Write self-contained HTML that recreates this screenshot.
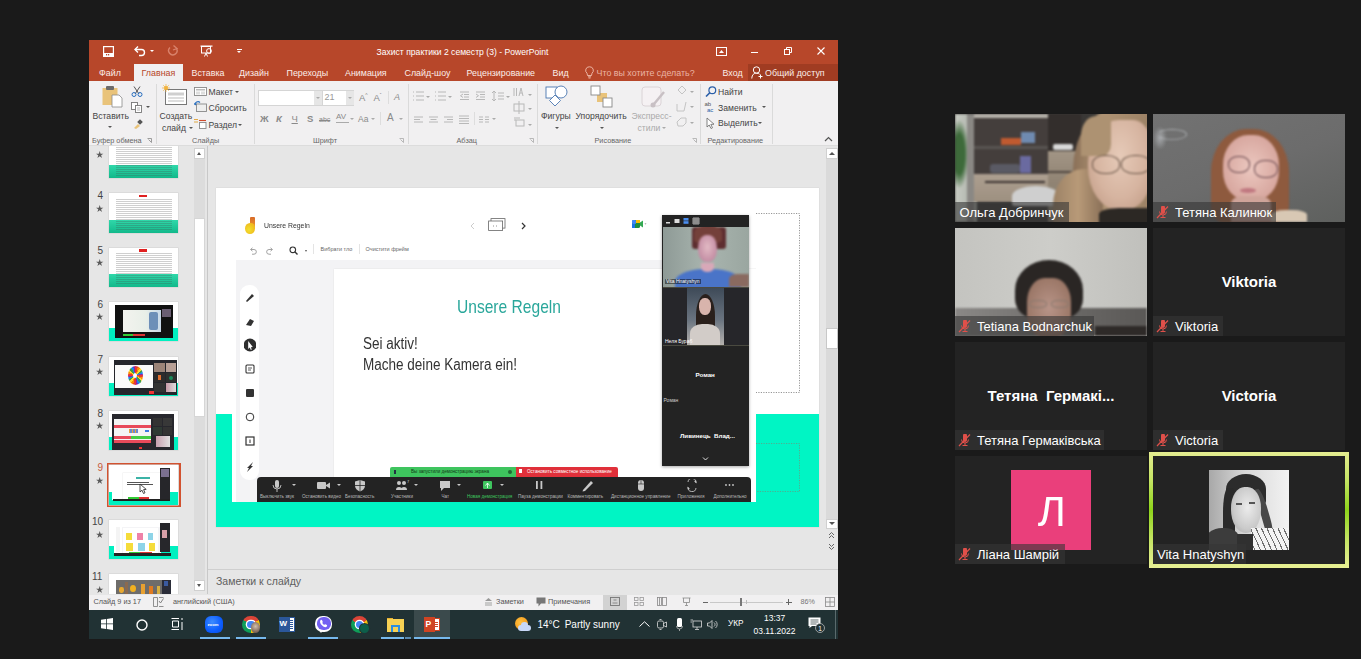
<!DOCTYPE html>
<html><head><meta charset="utf-8">
<style>
*{margin:0;padding:0;box-sizing:border-box}
html,body{width:1361px;height:659px;overflow:hidden;background:#1a1a1a;font-family:"Liberation Sans",sans-serif;position:relative}
.a{position:absolute}
.t{position:absolute;white-space:nowrap;line-height:1}
.tab{top:68.5px;font-size:8.9px;color:#fbeee9}
.sep{top:84px;width:1px;height:60px;background:#dadada}
.glbl{top:137.3px;font-size:7.3px;color:#666}
.rb{font-size:8.6px;color:#444}
.rbl{color:#8a8a8a}
.rbd{font-size:8.6px;color:#aaa}
.dd{width:0;height:0;border-left:2.5px solid transparent;border-right:2.5px solid transparent;border-top:2.5px solid #555}
.ddl{width:0;height:0;border-left:2.5px solid transparent;border-right:2.5px solid transparent;border-top:2.5px solid #aaa}
.th{width:69.6px;height:39.5px;background:#fff;box-shadow:0 0 0 0.6px #d4d4d4}
.tl{background:repeating-linear-gradient(transparent 0 1px,rgba(70,70,70,.26) 1px 2px)}
.num{position:absolute;font-size:10px;color:#444;line-height:1}
.star{position:absolute;font-size:7px;color:#555;line-height:1}
.ztl{top:495px;font-size:4.6px;color:#b8b8b8}
.sb{top:598.3px;font-size:7.3px;color:#555}
.tb{top:620px;font-size:10px;color:#fff}
.tile{position:absolute;width:192px;height:108px;background:#232323;overflow:hidden}
.lbl{position:absolute;left:0;top:88px;height:20px;background:rgba(54,54,54,.6)}
.lbl span{position:absolute;top:3.8px;font-size:13px;color:#fff;white-space:nowrap;line-height:1}
.mute{position:absolute;left:3px;top:4px;width:14px;height:13px}
.big{position:absolute;left:0;width:192px;text-align:center;font-size:15px;font-weight:bold;color:#fff;line-height:1;white-space:nowrap}
</style></head><body>
<!-- PPT window base -->
<div class="a" style="left:89px;top:40px;width:749px;height:570px;background:#e6e6e6"></div>
<!-- title bar -->
<div class="a" style="left:89px;top:40px;width:749px;height:41px;background:#b7472a"></div>
<!-- save -->
<svg class="a" style="left:103px;top:46px" width="11" height="11" viewBox="0 0 11 11"><rect x="0.6" y="0.6" width="9.8" height="9.8" fill="none" stroke="#fff" stroke-width="1.2"/><rect x="1" y="7" width="9" height="3.4" fill="#fff"/><rect x="3" y="8" width="1.2" height="1.4" fill="#b7472a"/><rect x="5" y="8" width="1.2" height="1.4" fill="#b7472a"/></svg>
<!-- undo -->
<svg class="a" style="left:133px;top:45px" width="13" height="12" viewBox="0 0 13 12"><path d="M2 4.5 H8.5 A3 3 0 0 1 8.5 10.5 H6" fill="none" stroke="#fff" stroke-width="1.4"/><path d="M5 1.5 L2 4.5 L5 7.5" fill="none" stroke="#fff" stroke-width="1.4"/></svg>
<div class="a" style="left:150px;top:50px;width:0;height:0;border-left:2.5px solid transparent;border-right:2.5px solid transparent;border-top:2.5px solid #fff"></div>
<!-- redo faded -->
<svg class="a" style="left:167px;top:45px" width="12" height="12" viewBox="0 0 12 12"><path d="M9.5 3.5 A4.2 4.2 0 1 1 3 2.5" fill="none" stroke="#d9826b" stroke-width="1.4"/><path d="M6.5 0.5 L10 3.5 L6 5" fill="none" stroke="#d9826b" stroke-width="1.3"/></svg>
<!-- present icon -->
<svg class="a" style="left:200px;top:45px" width="13" height="12" viewBox="0 0 13 12"><rect x="0.5" y="0.5" width="12" height="1.2" fill="#fff"/><rect x="1.5" y="1.5" width="9" height="6.5" fill="none" stroke="#fff" stroke-width="1"/><circle cx="9" cy="6" r="2.4" fill="none" stroke="#fff" stroke-width="1"/><path d="M6 8 L4.5 11.5 M6 8 L7.5 11.5" stroke="#fff" stroke-width="1"/></svg>
<div class="a" style="left:237px;top:49px;width:5px;height:1px;background:#fff"></div>
<div class="a" style="left:237px;top:51px;width:0;height:0;border-left:2.5px solid transparent;border-right:2.5px solid transparent;border-top:2.5px solid #fff"></div>
<div class="t" style="left:376.5px;top:47.6px;font-size:8.6px;color:#fff">Захист практики 2 семестр (3) - PowerPoint</div>
<!-- ribbon display options -->
<svg class="a" style="left:716px;top:47px" width="11" height="9" viewBox="0 0 11 9"><rect x="0.5" y="0.5" width="10" height="8" fill="none" stroke="#fff" stroke-width="1"/><path d="M3 6 L5.5 3 L8 6 Z" fill="#fff"/></svg>
<div class="a" style="left:751px;top:52px;width:7px;height:1.2px;background:#fff"></div>
<svg class="a" style="left:784px;top:47px" width="8" height="8" viewBox="0 0 8 8"><rect x="0.5" y="2.5" width="5" height="5" fill="none" stroke="#fff" stroke-width="1"/><path d="M2.5 2.5 V0.5 H7.5 V5.5 H5.5" fill="none" stroke="#fff" stroke-width="1"/></svg>
<svg class="a" style="left:817px;top:47px" width="8" height="8" viewBox="0 0 8 8"><path d="M0.5 0.5 L7.5 7.5 M7.5 0.5 L0.5 7.5" stroke="#fff" stroke-width="1.1"/></svg>
<!-- tabs -->
<div class="a" style="left:134px;top:64px;width:49px;height:18px;background:#f1f0f1"></div>
<div class="a" style="left:747.5px;top:64px;width:90.5px;height:17px;background:#a03c22"></div>
<div class="t tab" style="left:99px">Файл</div>
<div class="t tab" style="left:141.5px;color:#b7472a">Главная</div>
<div class="t tab" style="left:191.5px">Вставка</div>
<div class="t tab" style="left:239px">Дизайн</div>
<div class="t tab" style="left:286.5px">Переходы</div>
<div class="t tab" style="left:345px">Анимация</div>
<div class="t tab" style="left:404.5px">Слайд-шоу</div>
<div class="t tab" style="left:466.5px">Рецензирование</div>
<div class="t tab" style="left:552.5px">Вид</div>
<svg class="a" style="left:585px;top:66px" width="9" height="13" viewBox="0 0 9 13"><path d="M4.5 0.8 A3.6 3.6 0 0 1 7 7.2 L6.5 9.5 H2.5 L2 7.2 A3.6 3.6 0 0 1 4.5 0.8 Z" fill="none" stroke="#f0c0b0" stroke-width="0.9"/><path d="M3 10.8 H6 M3.5 12 H5.5" stroke="#f0c0b0" stroke-width="0.9"/></svg>
<div class="t tab" style="left:596.5px;color:#eab4a4">Что вы хотите сделать?</div>
<div class="t tab" style="left:722.5px">Вход</div>
<svg class="a" style="left:751px;top:66px" width="12" height="13" viewBox="0 0 12 13"><circle cx="5.5" cy="4" r="3.2" fill="none" stroke="#fff" stroke-width="1"/><path d="M0.8 12.5 C1 8.5 3 7.2 5.5 7.2 C7 7.2 8 7.6 8.6 8.2" fill="none" stroke="#fff" stroke-width="1"/><path d="M9.5 8.5 V12.5 M7.5 10.5 H11.5" stroke="#fff" stroke-width="1"/></svg>
<div class="t tab" style="left:765px">Общий доступ</div>
<!-- ribbon -->
<div class="a" style="left:89px;top:81px;width:749px;height:65px;background:#f1f0f1;border-bottom:1px solid #dcdcdc"></div>
<!-- separators -->
<div class="a sep" style="left:155.5px"></div>
<div class="a sep" style="left:254px"></div>
<div class="a sep" style="left:408px"></div>
<div class="a sep" style="left:537px"></div>
<div class="a sep" style="left:700px"></div>
<div class="a sep" style="left:771.5px"></div>
<!-- group labels -->
<div class="t glbl" style="left:92px">Буфер обмена</div>
<div class="t glbl" style="left:192px">Слайды</div>
<div class="t glbl" style="left:313px">Шрифт</div>
<div class="t glbl" style="left:456.5px">Абзац</div>
<div class="t glbl" style="left:594.5px">Рисование</div>
<div class="t glbl" style="left:707.5px">Редактирование</div>
<!-- launchers -->
<svg class="a" style="left:147px;top:138px" width="5" height="5" viewBox="0 0 5 5"><path d="M0.5 0.5 H4.5 V4.5 M1.5 1.5 L4.5 4.5" fill="none" stroke="#888" stroke-width="0.8"/></svg>
<svg class="a" style="left:399px;top:138px" width="5" height="5" viewBox="0 0 5 5"><path d="M0.5 0.5 H4.5 V4.5 M1.5 1.5 L4.5 4.5" fill="none" stroke="#aaa" stroke-width="0.8"/></svg>
<svg class="a" style="left:529px;top:138px" width="5" height="5" viewBox="0 0 5 5"><path d="M0.5 0.5 H4.5 V4.5 M1.5 1.5 L4.5 4.5" fill="none" stroke="#aaa" stroke-width="0.8"/></svg>
<svg class="a" style="left:692px;top:138px" width="5" height="5" viewBox="0 0 5 5"><path d="M0.5 0.5 H4.5 V4.5 M1.5 1.5 L4.5 4.5" fill="none" stroke="#aaa" stroke-width="0.8"/></svg>
<svg class="a" style="left:824px;top:136px" width="9" height="6" viewBox="0 0 9 6"><path d="M1 5 L4.5 1.5 L8 5" fill="none" stroke="#555" stroke-width="1.2"/></svg>

<!-- Clipboard group -->
<svg class="a" style="left:101px;top:85px" width="24" height="24" viewBox="0 0 24 24"><rect x="1.5" y="3" width="15" height="17" fill="#e9c37a"/><rect x="5" y="1" width="8" height="4" rx="1" fill="#6b6b6b"/><path d="M11 10 H18 L21 13 V22 H11 Z" fill="#fff" stroke="#8a8a8a" stroke-width="0.8"/></svg>
<div class="t rb" style="left:92.5px;top:111.5px">Вставить</div>
<div class="a dd" style="left:108px;top:126px"></div>
<svg class="a" style="left:131px;top:86px" width="12" height="11" viewBox="0 0 12 11"><path d="M3 0.5 L8 8 M9 0.5 L4 8" stroke="#555" stroke-width="1"/><circle cx="3" cy="8.5" r="2" fill="none" stroke="#2a6fbf" stroke-width="1"/><circle cx="9" cy="8.5" r="2" fill="none" stroke="#2a6fbf" stroke-width="1"/></svg>
<svg class="a" style="left:131px;top:102px" width="12" height="11" viewBox="0 0 12 11"><rect x="0.5" y="0.5" width="6" height="7" fill="#fff" stroke="#777" stroke-width="0.9"/><rect x="4.5" y="3.5" width="6" height="7" fill="#fff" stroke="#777" stroke-width="0.9"/><path d="M6 6 H9 M6 8 H9" stroke="#999" stroke-width="0.7"/></svg>
<div class="a dd" style="left:146px;top:106px"></div>
<svg class="a" style="left:133px;top:119px" width="10" height="10" viewBox="0 0 10 10"><path d="M1 9 L5 5 L7 7 L3 10 Z" fill="#e9c37a"/><rect x="5" y="1" width="4" height="4" transform="rotate(45 7 3)" fill="#555"/></svg>

<!-- Slides group -->
<svg class="a" style="left:162px;top:84px" width="26" height="22" viewBox="0 0 26 22"><rect x="3.5" y="5.5" width="21" height="15" fill="#fff" stroke="#777" stroke-width="1"/><rect x="6" y="8.5" width="16" height="3" fill="#cfcfcf"/><path d="M6 14 H22 M6 17 H22" stroke="#aaa" stroke-width="0.8"/><circle cx="4" cy="4" r="2" fill="#f2b33d"/><path d="M4 0 V8 M0 4 H8 M1.2 1.2 L6.8 6.8 M6.8 1.2 L1.2 6.8" stroke="#f2b33d" stroke-width="0.7"/></svg>
<div class="t rb" style="left:159.5px;top:112px">Создать</div>
<div class="t rb" style="left:162px;top:123.5px">слайд</div>
<div class="a dd" style="left:188.5px;top:127px"></div>
<svg class="a" style="left:194px;top:87px" width="13" height="9" viewBox="0 0 13 9"><rect x="0.5" y="0.5" width="12" height="8" fill="#fff" stroke="#888" stroke-width="0.9"/><rect x="2" y="2" width="9" height="1.5" fill="#bbb"/><rect x="2" y="4.5" width="4" height="3" fill="#ddd"/><rect x="7" y="4.5" width="4" height="3" fill="#ddd"/></svg>
<div class="t rb" style="left:208.5px;top:88px">Макет</div>
<div class="a dd" style="left:235px;top:91px"></div>
<svg class="a" style="left:194px;top:101px" width="13" height="11" viewBox="0 0 13 11"><rect x="2.5" y="3" width="10" height="7.5" fill="#eee" stroke="#888" stroke-width="0.9"/><path d="M1 4 A3 3 0 0 1 6 1.5" fill="none" stroke="#2a6fbf" stroke-width="1.2"/><path d="M0 2 L1.2 4.5 L3 2.8" fill="#2a6fbf"/></svg>
<div class="t rb" style="left:208.5px;top:104px">Сбросить</div>
<svg class="a" style="left:194px;top:118px" width="13" height="11" viewBox="0 0 13 11"><path d="M0 1.5 H4 M0 4 H4" stroke="#e0a030" stroke-width="0.9"/><path d="M5 2.5 H12" stroke="#d04a2a" stroke-width="1.1"/><rect x="5.5" y="4.5" width="6.5" height="6" fill="#fff" stroke="#888" stroke-width="0.9"/></svg>
<div class="t rb" style="left:208.5px;top:121px">Раздел</div>
<div class="a dd" style="left:238px;top:124px"></div>

<!-- Font group -->
<div class="a" style="left:257.5px;top:89.5px;width:96.5px;height:16px;background:#fff;border:1px solid #d5d5d5"></div>
<div class="a" style="left:313.5px;top:90.5px;width:8px;height:14px;background:#e6e6e6"></div>
<div class="a" style="left:321.5px;top:90px;width:1px;height:15px;background:#d5d5d5"></div>
<div class="a" style="left:345.5px;top:90.5px;width:8px;height:14px;background:#e6e6e6"></div>
<div class="a ddl" style="left:316px;top:97px"></div>
<div class="a ddl" style="left:348px;top:97px"></div>
<div class="t" style="left:324.5px;top:93px;font-size:9px;color:#999">21</div>
<div class="t rbl" style="left:359px;top:93px;font-size:9.5px">A<sup style="font-size:5px">^</sup></div>
<div class="t rbl" style="left:373.5px;top:93px;font-size:9.5px">A<sup style="font-size:5px">ˇ</sup></div>
<div class="a" style="left:387.5px;top:91px;width:1px;height:13px;background:#ddd"></div>
<div class="t rbl" style="left:394px;top:93px;font-size:9px;font-style:italic">A</div>
<div class="t rbl" style="left:260px;top:114px;font-size:9.5px;font-weight:bold">Ж</div>
<div class="t rbl" style="left:276px;top:114px;font-size:9.5px;font-style:italic;font-weight:bold">К</div>
<div class="t rbl" style="left:291.5px;top:114px;font-size:9.5px;text-decoration:underline">Ч</div>
<div class="t rbl" style="left:307px;top:114px;font-size:9.5px;font-weight:bold">S</div>
<div class="t rbl" style="left:319px;top:116px;font-size:7px;text-decoration:line-through">abc</div>
<div class="t rbl" style="left:336px;top:113px;font-size:8px">AV</div>
<div class="a" style="left:336px;top:122px;width:13px;height:1px;background:#aaa"></div>
<div class="a ddl" style="left:350px;top:118px"></div>
<div class="t rbl" style="left:358px;top:115px;font-size:8.5px">Aa</div>
<div class="a ddl" style="left:371px;top:118px"></div>
<div class="a" style="left:380px;top:112px;width:1px;height:13px;background:#ddd"></div>
<div class="t rbl" style="left:387px;top:113px;font-size:10px">A</div>
<div class="a ddl" style="left:399px;top:118px"></div>

<!-- Paragraph group (faded icons) -->
<svg class="a" style="left:412px;top:90px" width="110" height="40" viewBox="0 0 110 40" stroke="#b8b8b8" stroke-width="1" fill="none">
 <path d="M1 2 h1 M1 6 h1 M1 10 h1 M4 2 h8 M4 6 h8 M4 10 h8"/>
 <path d="M23 2 h1 M23 6 h1 M23 10 h1 M26 2 h8 M26 6 h8 M26 10 h8"/>
 <path d="M48 2 h9 M52 4.5 h5 M52 7 h5 M48 9.5 h9 M51 4 L48.5 5.7 L51 7.5"/>
 <path d="M64 2 h9 M68 4.5 h5 M68 7 h5 M64 9.5 h9 M64 4 L66.5 5.7 L64 7.5"/>
 <path d="M82 1 V11 M80 3 L82 1 L84 3 M80 9 L82 11 L84 9 M86 3 h6 M86 6 h6 M86 9 h6"/>
 <path d="M2 27 h9 M2 29.5 h6 M2 32 h9"/>
 <path d="M17 27 h9 M18.5 29.5 h6 M17 32 h9"/>
 <path d="M32 27 h9 M35 29.5 h6 M32 32 h9"/>
 <path d="M47 26 h10 M47 28.5 h10 M47 31 h10 M47 33.5 h10"/>
 <path d="M67 27 h4 M67 29.5 h4 M67 32 h4 M73 27 h4 M73 29.5 h4 M73 32 h4"/>
</svg>
<div class="a ddl" style="left:426px;top:96px"></div>
<div class="a ddl" style="left:448px;top:96px"></div>
<div class="a ddl" style="left:506px;top:96px"></div>
<div class="a" style="left:474px;top:112px;width:1px;height:13px;background:#ddd"></div>
<div class="a ddl" style="left:492px;top:118px"></div>
<svg class="a" style="left:513px;top:86px" width="12" height="42" viewBox="0 0 12 42" stroke="#b8b8b8" stroke-width="1" fill="none">
 <path d="M1 2 V10 M3.5 2 V10 M6 10 L8 2 L10 10 M7 7 h2"/>
 <rect x="1" y="18" width="10" height="7"/><path d="M6 15 V28"/>
 <rect x="3" y="34" width="8" height="6"/><path d="M1 32 h6 M1 34 h2"/>
</svg>
<div class="a ddl" style="left:528px;top:94px"></div>
<div class="a ddl" style="left:528px;top:108px"></div>
<div class="a ddl" style="left:528px;top:124px"></div>

<!-- Drawing group -->
<svg class="a" style="left:545px;top:84px" width="24" height="24" viewBox="0 0 24 24"><rect x="1" y="3" width="11" height="11" fill="#fff" stroke="#4a76b0" stroke-width="0.9"/><circle cx="16" cy="8" r="6" fill="#fff" stroke="#4a76b0" stroke-width="0.9"/><path d="M10 11 L15.5 16.5 L10 22 L4.5 16.5 Z" fill="#fff" stroke="#4a76b0" stroke-width="0.9"/></svg>
<div class="t rb" style="left:541px;top:112px">Фигуры</div>
<div class="a dd" style="left:555px;top:127px"></div>
<svg class="a" style="left:590px;top:85px" width="24" height="23" viewBox="0 0 24 23"><rect x="7" y="8" width="10" height="9" fill="#e9c37a"/><rect x="1" y="1" width="9" height="9" fill="#fff" stroke="#888" stroke-width="0.9"/><rect x="13" y="13" width="9" height="9" fill="#fff" stroke="#888" stroke-width="0.9"/></svg>
<div class="t rb" style="left:575.5px;top:112px">Упорядочить</div>
<div class="a dd" style="left:600px;top:127px"></div>
<svg class="a" style="left:641px;top:86px" width="24" height="23" viewBox="0 0 24 23"><rect x="1" y="1" width="19" height="19" rx="3" fill="#f5f1f3" stroke="#d8d0d4" stroke-width="0.9"/><path d="M23 6 L13 18" stroke="#c8c0c4" stroke-width="2.5"/><circle cx="12" cy="19" r="2.5" fill="#c8c0c4"/></svg>
<div class="t rbd" style="left:631.5px;top:112px">Экспресс-</div>
<div class="t rbd" style="left:637.5px;top:123.5px">стили</div>
<div class="a ddl" style="left:662px;top:127px"></div>
<svg class="a" style="left:676px;top:85px" width="11" height="43" viewBox="0 0 11 43" fill="none" stroke="#c4c4c4" stroke-width="1">
 <path d="M2 5 L6 1 L10 5 L6 9 Z"/>
 <path d="M1 19 V26 H8 L10 17"/>
 <path d="M1 37 L5 33 H10 V38 L7 41 H2 Z"/>
</svg>
<div class="a ddl" style="left:690px;top:91px"></div>
<div class="a ddl" style="left:690px;top:106px"></div>
<div class="a ddl" style="left:690px;top:122px"></div>

<!-- Editing group -->
<svg class="a" style="left:705px;top:86px" width="12" height="11" viewBox="0 0 12 11"><circle cx="7.3" cy="4.2" r="3.4" fill="none" stroke="#2a5fa8" stroke-width="1.2"/><path d="M4.8 6.7 L1 10.5" stroke="#2a5fa8" stroke-width="1.6"/></svg>
<div class="t rb" style="left:718px;top:88px">Найти</div>
<div class="t" style="left:704.5px;top:101px;font-size:6px;color:#555">ab</div>
<div class="t" style="left:707px;top:107px;font-size:6px;color:#2a5fa8">ac</div>
<div class="t rb" style="left:718px;top:103.5px">Заменить</div>
<div class="a dd" style="left:762px;top:106px"></div>
<svg class="a" style="left:706px;top:117px" width="9" height="12" viewBox="0 0 9 12"><path d="M1 1 V10 L3.2 8 L5 11.5 L6.5 10.8 L4.8 7.4 L8 7.2 Z" fill="#fff" stroke="#666" stroke-width="0.8"/></svg>
<div class="t rb" style="left:718px;top:119px">Выделить</div>
<div class="a dd" style="left:758px;top:122px"></div>
<!-- thumbnails panel -->
<div class="a" style="left:89px;top:146px;width:118px;height:448px;background:#e6e6e6;overflow:hidden">
 <!-- slide 3 partial -->
 <div class="a th" style="left:19.7px;top:-8px;height:40px"></div>
 <div class="a" style="left:19.7px;top:19px;width:69.6px;height:13px;background:linear-gradient(#30d8aa,#12b88a)"></div>
 <div class="a tl" style="left:26.5px;top:-6px;width:56px;height:36px"></div>
 <svg class="a" style="left:7.2px;top:4.5px" width="7.4" height="7" viewBox="0 0 10 9.5"><path d="M5 0 L6.2 3.6 L10 3.6 L6.9 5.8 L8.1 9.5 L5 7.2 L1.9 9.5 L3.1 5.8 L0 3.6 L3.8 3.6 Z" fill="#5a5a5a"/></svg>
 <!-- slide 4 -->
 <div class="a num" style="left:8.5px;top:45.0px">4</div><svg class="a" style="left:7.2px;top:58.6px" width="7.4" height="7" viewBox="0 0 10 9.5"><path d="M5 0 L6.2 3.6 L10 3.6 L6.9 5.8 L8.1 9.5 L5 7.2 L1.9 9.5 L3.1 5.8 L0 3.6 L3.8 3.6 Z" fill="#5a5a5a"/></svg>
 <div class="a th" style="left:19.7px;top:47px"></div>
 <div class="a" style="left:19.7px;top:73.5px;width:69.6px;height:13px;background:linear-gradient(#30d8aa,#12b88a)"></div>
 <div class="a tl" style="left:26.5px;top:51.5px;width:56px;height:33px"></div>
 <div class="a" style="left:50px;top:48.7px;width:8px;height:2.4px;background:#e02020"></div>
 <!-- slide 5 -->
 <div class="a num" style="left:8.5px;top:99.5px">5</div><svg class="a" style="left:7.2px;top:113.1px" width="7.4" height="7" viewBox="0 0 10 9.5"><path d="M5 0 L6.2 3.6 L10 3.6 L6.9 5.8 L8.1 9.5 L5 7.2 L1.9 9.5 L3.1 5.8 L0 3.6 L3.8 3.6 Z" fill="#5a5a5a"/></svg>
 <div class="a th" style="left:19.7px;top:101.5px"></div>
 <div class="a" style="left:19.7px;top:128px;width:69.6px;height:13px;background:linear-gradient(#30d8aa,#12b88a)"></div>
 <div class="a tl" style="left:26.5px;top:106px;width:56px;height:33px"></div>
 <div class="a" style="left:50px;top:103.2px;width:8px;height:2.4px;background:#e02020"></div>
 <!-- slide 6 -->
 <div class="a num" style="left:8.5px;top:153.7px">6</div><svg class="a" style="left:7.2px;top:167.3px" width="7.4" height="7" viewBox="0 0 10 9.5"><path d="M5 0 L6.2 3.6 L10 3.6 L6.9 5.8 L8.1 9.5 L5 7.2 L1.9 9.5 L3.1 5.8 L0 3.6 L3.8 3.6 Z" fill="#5a5a5a"/></svg>
 <div class="a th" style="left:19.7px;top:155.7px"></div>
 <div class="a" style="left:19.7px;top:182.3px;width:69.6px;height:13px;background:#00f0c0"></div>
 <div class="a" style="left:25.8px;top:159.3px;width:58.2px;height:32.7px;background:#111"></div>
 <div class="a" style="left:34px;top:163.5px;width:38px;height:22px;background:linear-gradient(90deg,#f3f3ee,#e8efe8 60%,#c8d8e8)"></div>
 <div class="a" style="left:60px;top:166px;width:9px;height:18px;background:#6d8fb8;border-radius:2px"></div>
 <div class="a" style="left:73px;top:163px;width:9px;height:8px;background:#6a5e72"></div>
 <div class="a" style="left:34px;top:188px;width:10px;height:1.6px;background:#3c3"></div><div class="a" style="left:44px;top:188px;width:12px;height:1.6px;background:#d33"></div>
 <!-- slide 7 -->
 <div class="a num" style="left:8.5px;top:208.7px">7</div><svg class="a" style="left:7.2px;top:222.3px" width="7.4" height="7" viewBox="0 0 10 9.5"><path d="M5 0 L6.2 3.6 L10 3.6 L6.9 5.8 L8.1 9.5 L5 7.2 L1.9 9.5 L3.1 5.8 L0 3.6 L3.8 3.6 Z" fill="#5a5a5a"/></svg>
 <div class="a th" style="left:19.7px;top:210.7px"></div>
 <div class="a" style="left:19.7px;top:236.5px;width:69.6px;height:13px;background:#00f0c0"></div>
 <div class="a" style="left:25px;top:213.7px;width:63px;height:35.5px;background:#25262c"></div>
 <div class="a" style="left:26px;top:219px;width:38px;height:23px;background:#fafafa"></div>
 <div class="a" style="left:38.5px;top:220px;width:15px;height:19px;border-radius:50%;background:repeating-conic-gradient(#e53935 0 15deg,#fb8c00 15deg 30deg,#fdd835 30deg 45deg,#43a047 45deg 60deg,#1e88e5 60deg 75deg,#8e24aa 75deg 90deg)"></div>
 <div class="a" style="left:44px;top:227px;width:4px;height:5px;border-radius:50%;background:#fff"></div>
 <div class="a" style="left:65px;top:217px;width:10.5px;height:9px;background:#9c8478"></div>
 <div class="a" style="left:76.5px;top:217px;width:10.5px;height:9px;background:#b8a096"></div>
 <div class="a" style="left:65px;top:227px;width:10.5px;height:9px;background:#2e2c2c"></div><div class="a" style="left:69px;top:229px;width:3px;height:5px;background:#e07030"></div>
 <div class="a" style="left:76.5px;top:227px;width:10.5px;height:9px;background:#2e302e"></div><div class="a" style="left:80px;top:229.5px;width:4px;height:4px;border-radius:50%;background:#1a8a5a"></div>
 <div class="a" style="left:65px;top:237px;width:10.5px;height:9px;background:#333"></div>
 <div class="a" style="left:76.5px;top:237px;width:10.5px;height:9px;background:linear-gradient(90deg,#c89aa8,#ddd)"></div>
 <div class="a" style="left:60px;top:245px;width:5px;height:3px;background:#e33"></div>
 <!-- slide 8 -->
 <div class="a num" style="left:8.5px;top:262.8px">8</div><svg class="a" style="left:7.2px;top:276.4px" width="7.4" height="7" viewBox="0 0 10 9.5"><path d="M5 0 L6.2 3.6 L10 3.6 L6.9 5.8 L8.1 9.5 L5 7.2 L1.9 9.5 L3.1 5.8 L0 3.6 L3.8 3.6 Z" fill="#5a5a5a"/></svg>
 <div class="a th" style="left:19.7px;top:264.8px"></div>
 <div class="a" style="left:19.7px;top:290.7px;width:69.6px;height:13.6px;background:#00f0c0"></div>
 <div class="a" style="left:23px;top:268px;width:62px;height:36px;background:#27272d"></div>
 <div class="a" style="left:24.5px;top:273px;width:37.5px;height:24px;background:#f4f4f4"></div>
 <div class="a" style="left:24.5px;top:279px;width:37.5px;height:2.5px;background:#e84a5a"></div>
 <div class="a" style="left:40px;top:283px;width:9px;height:4px;background:repeating-linear-gradient(90deg,#e8a040 0 1.5px,#6a8ad0 1.5px 3px)"></div>
 <div class="a" style="left:56px;top:284px;width:4px;height:2px;background:#3a7ae0"></div>
 <div class="a" style="left:24.5px;top:290px;width:37.5px;height:2.5px;background:#e84a5a"></div>
 <div class="a" style="left:42px;top:290px;width:20px;height:2.5px;background:#4c4"></div>
 <div class="a" style="left:24.5px;top:294px;width:37.5px;height:2.5px;background:#e84a5a"></div>
 <div class="a" style="left:64px;top:272px;width:9px;height:8px;background:#333"></div><div class="a" style="left:74px;top:272px;width:9px;height:8px;background:#383838"></div>
 <div class="a" style="left:64px;top:281px;width:9px;height:8px;background:#2e3a34"></div><div class="a" style="left:74px;top:281px;width:9px;height:8px;background:#333"></div>
 <div class="a" style="left:67px;top:290px;width:14px;height:11px;background:linear-gradient(90deg,#c8a0b0,#e0e0e0)"></div>
 <div class="a" style="left:50px;top:301px;width:3px;height:2px;background:#e33"></div>
 <!-- slide 9 selected -->
 <div class="a num" style="left:8.5px;top:317.0px;color:#c75b3b">9</div><svg class="a" style="left:7.2px;top:330.6px" width="7.4" height="7" viewBox="0 0 10 9.5"><path d="M5 0 L6.2 3.6 L10 3.6 L6.9 5.8 L8.1 9.5 L5 7.2 L1.9 9.5 L3.1 5.8 L0 3.6 L3.8 3.6 Z" fill="#5a5a5a"/></svg>
 <div class="a" style="left:17.5px;top:316.5px;width:74.5px;height:44.5px;border:2px solid #d2522f"></div>
 <div class="a th" style="left:19.7px;top:319px;height:39.5px"></div>
 <div class="a" style="left:19.7px;top:345.5px;width:69.6px;height:13px;background:#00f0c0"></div>
 <div class="a" style="left:22.5px;top:321px;width:58px;height:33px;background:#fff"></div>
 <div class="a" style="left:34px;top:327px;width:37px;height:26px;background:#fff;box-shadow:0 0 0 0.5px #eee"></div>
 <div class="a" style="left:47px;top:331px;width:14px;height:1.5px;background:#3bb3a6"></div>
 <div class="a" style="left:38px;top:336px;width:22px;height:1px;background:#555"></div><div class="a" style="left:38px;top:338px;width:26px;height:1px;background:#555"></div>
 <div class="a" style="left:71px;top:322px;width:10px;height:32px;background:#26262a"></div>
 <div class="a" style="left:72px;top:323px;width:8px;height:8px;background:#7b7090"></div>
 <div class="a" style="left:24px;top:352.5px;width:57px;height:2px;background:#222"></div>
 <div class="a" style="left:39px;top:351px;width:11px;height:1.5px;background:#3c3"></div><div class="a" style="left:50px;top:351px;width:10px;height:1.5px;background:#d33"></div>
 <svg class="a" style="left:50px;top:337px" width="8" height="11" viewBox="0 0 8 11"><path d="M1 1 V9 L3 7.2 L4.5 10.5 L6 9.8 L4.6 6.6 L7.2 6.4 Z" fill="#fff" stroke="#222" stroke-width="0.8"/></svg>
 <!-- slide 10 -->
 <div class="a num" style="left:3px;top:371.0px">10</div><svg class="a" style="left:7.2px;top:384.6px" width="7.4" height="7" viewBox="0 0 10 9.5"><path d="M5 0 L6.2 3.6 L10 3.6 L6.9 5.8 L8.1 9.5 L5 7.2 L1.9 9.5 L3.1 5.8 L0 3.6 L3.8 3.6 Z" fill="#5a5a5a"/></svg>
 <div class="a th" style="left:19.7px;top:373.5px"></div>
 <div class="a" style="left:19.7px;top:400px;width:69.6px;height:12.9px;background:#00f0c0"></div>
 <div class="a" style="left:24.5px;top:376px;width:47px;height:31px;background:#fff"></div>
 <div class="a" style="left:27px;top:381px;width:4px;height:25px;background:#f4f4f4"></div>
 <div class="a" style="left:33px;top:381px;width:38px;height:26px;background:#f4f4f6"></div>
 <div class="a" style="left:34px;top:382px;width:35px;height:25px;background:#fff"></div>
 <div class="a" style="left:36.8px;top:387.2px;width:6.7px;height:7.3px;background:#f5dc3a"></div>
 <div class="a" style="left:47.8px;top:387.2px;width:5.8px;height:7.3px;background:#ee82a8"></div>
 <div class="a" style="left:58.7px;top:387.2px;width:5.3px;height:7.3px;background:#8ed4e8"></div>
 <div class="a" style="left:36.5px;top:396.9px;width:7.5px;height:7.9px;background:#f5dc3a"></div>
 <div class="a" style="left:49px;top:396.9px;width:6.5px;height:7.9px;background:#8ed4e8"></div>
 <div class="a" style="left:60px;top:396.9px;width:6px;height:7.9px;background:#f5dc3a"></div>
 <div class="a" style="left:71px;top:377px;width:10px;height:29px;background:#27272b"></div>
 <div class="a" style="left:73px;top:384px;width:5px;height:8px;background:#d8a0a8"></div>
 <div class="a" style="left:24.7px;top:406.5px;width:57px;height:3px;background:#222"></div>
 <div class="a" style="left:40px;top:405.5px;width:11px;height:1.2px;background:#3c3"></div><div class="a" style="left:51px;top:405.5px;width:12px;height:1.2px;background:#d33"></div>
 <!-- slide 11 -->
 <div class="a num" style="left:3px;top:426.0px">11</div><svg class="a" style="left:7.2px;top:439.6px" width="7.4" height="7" viewBox="0 0 10 9.5"><path d="M5 0 L6.2 3.6 L10 3.6 L6.9 5.8 L8.1 9.5 L5 7.2 L1.9 9.5 L3.1 5.8 L0 3.6 L3.8 3.6 Z" fill="#5a5a5a"/></svg>
 <div class="a th" style="left:19.7px;top:428px"></div>
 <div class="a" style="left:27px;top:434px;width:54.7px;height:20px;background:#6e6c6a"></div>
 <div class="a" style="left:30px;top:441px;width:5px;height:6px;background:#e8a830;border-radius:40%"></div>
 <div class="a" style="left:36px;top:436px;width:3px;height:12px;background:#8a6a50"></div>
 <div class="a" style="left:41px;top:439px;width:6px;height:7px;background:#f0b020;border-radius:50%"></div>
 <div class="a" style="left:52px;top:438px;width:4px;height:10px;background:#e8a030"></div>
 <div class="a" style="left:60px;top:440px;width:4px;height:8px;background:#e07a20"></div>
 <div class="a" style="left:68px;top:440px;width:3px;height:8px;background:#d8b040"></div>
 <div class="a" style="left:73px;top:434px;width:8.7px;height:20px;background:#2a2c38"></div>
 <div class="a" style="left:75px;top:435px;width:4px;height:5px;background:#3a5aa0"></div>
</div>
<!-- thumbs scrollbar -->
<div class="a" style="left:193.5px;top:148px;width:11px;height:443px;background:#dcdcdc"></div>
<div class="a" style="left:193.5px;top:148px;width:11px;height:11px;background:#fff;border:1px solid #d0d0d0"></div>
<div class="a" style="left:196.5px;top:152px;width:0;height:0;border-left:2.5px solid transparent;border-right:2.5px solid transparent;border-bottom:3px solid #555"></div>
<div class="a" style="left:193.5px;top:218px;width:11px;height:199px;background:#fff;border:1px solid #d6d6d6"></div>
<div class="a" style="left:193.5px;top:580px;width:11px;height:11px;background:#fff;border:1px solid #d0d0d0"></div>
<div class="a" style="left:196.5px;top:584px;width:0;height:0;border-left:2.5px solid transparent;border-right:2.5px solid transparent;border-top:3px solid #555"></div>
<div class="a" style="left:206.5px;top:146px;width:1px;height:448px;background:#c8c8c8"></div>
<!-- canvas -->
<div class="a" style="left:207.5px;top:146px;width:618.5px;height:423px;background:#e6e6e6"></div>
<div class="a" style="left:207.5px;top:569px;width:630px;height:1px;background:#cfcfcf"></div>
<div class="t" style="left:216px;top:576.3px;font-size:10.5px;color:#5e5e5e">Заметки к слайду</div>
<!-- canvas scrollbar -->
<div class="a" style="left:826px;top:146px;width:12px;height:423px;background:#e6e6e6"></div>
<div class="a" style="left:826px;top:159px;width:11.5px;height:360px;background:#dadada"></div>
<div class="a" style="left:826px;top:148px;width:11.5px;height:11px;background:#fff;border:1px solid #d0d0d0"></div>
<div class="a" style="left:829px;top:152px;width:0;height:0;border-left:3px solid transparent;border-right:3px solid transparent;border-bottom:3px solid #555"></div>
<div class="a" style="left:826px;top:328px;width:11.5px;height:20.5px;background:#fff;border:1px solid #c8c8c8"></div>
<div class="a" style="left:826px;top:518.5px;width:11.5px;height:10px;background:#fff;border:1px solid #d0d0d0"></div>
<div class="a" style="left:829px;top:522px;width:0;height:0;border-left:3px solid transparent;border-right:3px solid transparent;border-top:3px solid #555"></div>
<svg class="a" style="left:828px;top:531px" width="7" height="20" viewBox="0 0 7 20" fill="none" stroke="#666" stroke-width="1"><path d="M1 4 L3.5 1.5 L6 4 M1 7 L3.5 4.5 L6 7 M1 13 L3.5 15.5 L6 13 M1 16 L3.5 18.5 L6 16"/></svg>
<!-- slide -->
<div class="a" style="left:215.5px;top:187.5px;width:603.5px;height:339px;background:#fff;box-shadow:0 0 1px #bbb"></div>
<div class="a" style="left:215.5px;top:413.7px;width:603.5px;height:113.3px;background:#00f5c4"></div>
<!-- placeholder dotted boxes -->
<svg class="a" style="left:755px;top:213px" width="46" height="181" viewBox="0 0 46 181"><path d="M1 0.5 H44.5 V179.5 H1" fill="none" stroke="#8a8a8a" stroke-width="0.9" stroke-dasharray="1.2 1.3"/></svg>
<svg class="a" style="left:755px;top:443px" width="46" height="50" viewBox="0 0 46 50"><path d="M1 0.5 H44.5 V48.5 H1" fill="none" stroke="#5aa58a" stroke-width="0.9" stroke-dasharray="1.2 1.3"/></svg>
<!-- jamboard screenshot -->
<div class="a" style="left:232px;top:205px;width:524px;height:296.5px;background:#fff;overflow:hidden">
 <!-- logo -->
 
 <div class="a" style="left:17.6px;top:11.5px;width:5.2px;height:12px;background:linear-gradient(#d86a28,#f0a030);border-radius:1px"></div><div class="a" style="left:12.5px;top:17.5px;width:10.3px;height:11.5px;background:radial-gradient(ellipse at 40% 60%,#f2e030,#f0c020 60%,#f0b020);border-radius:50% 40% 50% 50%;filter:blur(0.3px)"></div>
 <div class="t" style="left:31.5px;top:17px;font-size:7.8px;color:#333;transform:scaleX(.88);transform-origin:0 0">Unsere Regeln</div>
 <svg class="a" style="left:238px;top:17px" width="5" height="8" viewBox="0 0 5 8"><path d="M4 1 L1 4 L4 7" fill="none" stroke="#ccc" stroke-width="1"/></svg>
 <svg class="a" style="left:256px;top:13px" width="18" height="14" viewBox="0 0 18 14"><rect x="3" y="0.6" width="14" height="9.5" fill="none" stroke="#666" stroke-width="0.8"/><rect x="0.6" y="3" width="14" height="9.5" fill="#fff" stroke="#666" stroke-width="0.8"/><path d="M5 8 h1 M8 8 h1" stroke="#777" stroke-width="0.8"/></svg>
 <svg class="a" style="left:289px;top:17px" width="5" height="8" viewBox="0 0 5 8"><path d="M1 1 L4 4 L1 7" fill="none" stroke="#333" stroke-width="1.2"/></svg>
 <svg class="a" style="left:400px;top:14px" width="15" height="10" viewBox="0 0 15 10"><rect x="0" y="1" width="8" height="8" rx="1.5" fill="#1e8e3e"/><rect x="0" y="1" width="4" height="4" rx="1" fill="#4285f4"/><rect x="4" y="1" width="4" height="3" fill="#fbbc04"/><rect x="0" y="5" width="3" height="4" fill="#1a73e8"/><path d="M8 3.5 L11 1.5 V8.5 L8 6.5 Z" fill="#34a853"/><path d="M12.5 4.5 l1 1 l1 -1 z" fill="#777"/></svg>
 <!-- toolbar row -->
 <svg class="a" style="left:17px;top:42px" width="8" height="8" viewBox="0 0 8 8"><path d="M2 2.5 H5 A2.3 2.3 0 0 1 5 7.2 H3" fill="none" stroke="#999" stroke-width="0.9"/><path d="M3.5 0.8 L1.5 2.5 L3.5 4.2" fill="none" stroke="#999" stroke-width="0.9"/></svg>
 <svg class="a" style="left:34px;top:42px" width="8" height="8" viewBox="0 0 8 8"><path d="M6 2.5 H3 A2.3 2.3 0 0 0 3 7.2 H5" fill="none" stroke="#999" stroke-width="0.9"/><path d="M4.5 0.8 L6.5 2.5 L4.5 4.2" fill="none" stroke="#999" stroke-width="0.9"/></svg>
 <svg class="a" style="left:57px;top:41px" width="9" height="9" viewBox="0 0 9 9"><circle cx="3.8" cy="3.8" r="2.8" fill="none" stroke="#333" stroke-width="1.1"/><path d="M5.8 5.8 L8.5 8.5" stroke="#333" stroke-width="1.4"/></svg>
 <div class="a" style="left:73px;top:45px;width:0;height:0;border-left:1.5px solid transparent;border-right:1.5px solid transparent;border-top:2px solid #555"></div>
 <div class="a" style="left:81px;top:39px;width:1px;height:10px;background:#e4e4e4"></div>
 <div class="t" style="left:88.5px;top:42.3px;font-size:5.5px;color:#666">Вибрати тло</div>
 <div class="a" style="left:127px;top:39px;width:1px;height:10px;background:#e4e4e4"></div>
 <div class="t" style="left:133.5px;top:42.3px;font-size:5.5px;color:#666">Очистити фрейм</div>
 <!-- gray canvas -->
 <div class="a" style="left:4px;top:54.5px;width:513px;height:243px;background:#f3f3f5"></div>
 <div class="a" style="left:8px;top:80px;width:19px;height:195px;background:#fff;border-radius:9px"></div>
 <svg class="a" style="left:12px;top:85px" width="12" height="190" viewBox="0 0 12 190">
  <path d="M2 11 L8 4 L10 6 L3 12 Z" fill="#333"/>
  <path d="M2 35 L6 29 L10 31 L7 36 Z" fill="#333"/>
  <circle cx="6" cy="55" r="6.4" fill="#2e2e2e"/><path d="M4.2 51 V59 L5.8 57.6 L6.8 60 L7.8 59.5 L6.9 57.2 L8.8 57 Z" fill="#fff"/>
  <rect x="2" y="75" width="8" height="8" rx="1" fill="none" stroke="#333" stroke-width="1.1"/><path d="M4 78 h4 M4 80 h3" stroke="#333" stroke-width="0.8"/>
  <rect x="2" y="99" width="8" height="8" rx="1" fill="#333"/>
  <circle cx="6" cy="127" r="3.8" fill="none" stroke="#333" stroke-width="1"/>
  <rect x="2" y="147" width="8" height="8" fill="none" stroke="#333" stroke-width="1.2"/><path d="M6 149.5 V153" stroke="#333" stroke-width="1"/>
  <path d="M3 178 L9 172 L7 176 L9 176 L3 182 L5 178 Z" fill="#333"/>
 </svg>
 <!-- frame -->
 <div class="a" style="left:102px;top:64.3px;width:430px;height:240px;background:#fff;box-shadow:0 0 1.5px #ddd"></div>
 <div class="t" style="left:224.6px;top:92.2px;font-size:19px;color:#2aa79b;transform:scaleX(.82);transform-origin:0 0">Unsere Regeln</div>
 <div class="t" style="left:130.6px;top:131.3px;font-size:16px;color:#333;transform:scaleX(.845);transform-origin:0 0">Sei aktiv!</div>
 <div class="t" style="left:130.6px;top:151.5px;font-size:16px;color:#333;transform:scaleX(.845);transform-origin:0 0">Mache deine Kamera ein!</div>
</div>
<!-- zoom floating panel in share -->
<div class="a" style="left:661.5px;top:214.5px;width:87.5px;height:251px;background:#232323;box-shadow:0 1px 3px rgba(0,0,0,.35)"></div>
<svg class="a" style="left:664px;top:217px" width="40" height="8" viewBox="0 0 40 8"><rect x="2" y="5" width="4" height="1.5" fill="#ddd"/><rect x="10.5" y="2" width="5" height="4" fill="#ddd"/><rect x="19.5" y="1" width="5" height="2.6" fill="#4a8ef0"/><rect x="19.5" y="4.2" width="5" height="2.6" fill="#4a8ef0"/><path d="M29 1 h6 v6 h-6 z M31 1 v6 M33 1 v6 M29 3 h6 M29 5 h6" fill="none" stroke="#ddd" stroke-width="0.7"/></svg>
<!-- video 1 -->
<div class="a" style="left:663px;top:226.6px;width:85.5px;height:60px;overflow:hidden;background:linear-gradient(90deg,#8e9a96,#a9b5af 50%,#9aa6a0)">
 <div class="a" style="left:0;top:0;width:86px;height:60px;filter:blur(0.9px)">
 <div class="a" style="left:29px;top:0;width:34px;height:22px;background:#5e2e30;border-radius:3px"></div>
 <div class="a" style="left:31px;top:-2px;width:28px;height:18px;background:#74403a;border-radius:45% 45% 20% 20%"></div>
 <div class="a" style="left:35px;top:8px;width:19px;height:27px;background:radial-gradient(ellipse at 50% 45%,#e2bac4,#c48ea4 70%,#a87890);border-radius:45%"></div>
 <div class="a" style="left:12px;top:42px;width:66px;height:28px;background:#4a74c8;border-radius:45% 45% 0 0"></div>
 <div class="a" style="left:38px;top:36px;width:13px;height:9px;background:#d8a8b8;border-radius:0 0 50% 50%"></div>
 <div class="a" style="left:66px;top:47px;width:20px;height:13px;background:#8a6a60;border-radius:40% 0 0 0"></div>
 </div>
 <div class="t" style="left:2px;top:52px;font-size:5px;color:#fff;background:rgba(0,0,0,.45);padding:0 1px">Vita Hnatyshyn</div>
</div>
<!-- video 2 -->
<div class="a" style="left:663px;top:287px;width:85.5px;height:59px;background:#26262a;border-top:1px solid #4a4a40;border-bottom:1px solid #4a4a40;overflow:hidden">
 <div class="a" style="left:23.5px;top:0;width:37px;height:58px;overflow:hidden;background:linear-gradient(#3e4a58,#6a7480 55%,#b8b4b0)">
  <div class="a" style="left:0;top:0;width:37px;height:58px;filter:blur(0.7px)">
  <div class="a" style="left:9px;top:6px;width:19px;height:44px;background:#2a201c;border-radius:50% 50% 30% 30%"></div>
  <div class="a" style="left:12px;top:10px;width:12px;height:17px;background:#d8b4ac;border-radius:45%"></div>
  <div class="a" style="left:3px;top:36px;width:30px;height:24px;background:#d2ccc8;border-radius:40% 40% 0 0"></div>
  </div>
 </div>
 <div class="t" style="left:2px;top:51px;font-size:5px;color:#fff">Неля Бураб</div>
</div>
<div class="t" style="left:695.5px;top:372px;font-size:6.2px;font-weight:bold;color:#fff">Роман</div>
<div class="t" style="left:663.5px;top:398px;font-size:5px;color:#ccc">Роман</div>
<div class="t" style="left:680px;top:432.5px;font-size:6.2px;font-weight:bold;color:#fff">Ливинець&nbsp; Влад...</div>
<svg class="a" style="left:702px;top:457px" width="7" height="4" viewBox="0 0 7 4"><path d="M1 0.5 L3.5 3 L6 0.5" fill="none" stroke="#ddd" stroke-width="1"/></svg>

<!-- banners -->
<div class="a" style="left:390px;top:466.5px;width:126px;height:11px;background:#3ec45e;border-radius:2px 0 0 0"></div>
<div class="t" style="left:411px;top:469.5px;font-size:4.6px;color:#123a18">Вы запустили демонстрацию экрана</div>
<div class="a" style="left:394px;top:469.5px;width:2px;height:4px;background:#234"></div>
<div class="a" style="left:507.5px;top:469.5px;width:4px;height:4px;border-radius:50%;background:#1f6a33"></div>
<div class="a" style="left:515.8px;top:466.5px;width:102.5px;height:11px;background:#e0303a;border-radius:0 2px 0 0"></div>
<div class="a" style="left:519px;top:468.5px;width:3px;height:4px;background:#fff"></div>
<div class="t" style="left:527px;top:469.5px;font-size:4.6px;color:#fff">Остановить совместное использование</div>
<!-- toolbar -->
<div class="a" style="left:257px;top:476.5px;width:494px;height:25px;background:#232323;border-radius:4px 4px 0 0"></div>
<svg class="a" style="left:257px;top:479px" width="494" height="14" viewBox="0 0 494 14" fill="#c8c8c8">
 <rect x="18" y="1" width="4" height="8" rx="2"/><path d="M16 6 A4 4 0 0 0 24 6 M20 10 V13" fill="none" stroke="#c8c8c8" stroke-width="0.9"/>
 <path d="M35 5 l2 2 l2 -2 z"/>
 <rect x="60" y="3" width="9" height="7" rx="1"/><path d="M69 6 L73 3.5 V9.5 L69 7 Z"/>
 <path d="M80 5 l2 2 l2 -2 z"/>
 <path d="M103 1 L108 2.5 V6.5 C108 9.5 106 11.5 103 12.5 C100 11.5 98 9.5 98 6.5 V2.5 Z"/><path d="M103 1 V12.5 M98 6.5 H108" stroke="#232323" stroke-width="0.8"/>
 <circle cx="142" cy="4" r="2"/><circle cx="147" cy="4" r="2"/><path d="M139 11 A3 3 0 0 1 145 11 Z M144 11 A3 3 0 0 1 150 11 Z"/>
 <text x="150" y="4" font-size="4" fill="#ccc" font-family="Liberation Sans">7</text>
 <path d="M157 5 l2 2 l2 -2 z"/>
 <path d="M183 2 h10 v7 h-6 l-3 3 v-3 h-1 z"/>
 <path d="M200 5 l2 2 l2 -2 z"/>
 <rect x="226" y="2" width="9" height="8" rx="1" fill="#3ec45e"/><path d="M228.5 6.5 L230.5 4 L232.5 6.5 M230.5 4 V9" stroke="#fff" stroke-width="0.8" fill="none"/>
 <path d="M243 5 l2 2 l2 -2 z"/>
 <rect x="279" y="2" width="1.8" height="8"/><rect x="283.5" y="2" width="1.8" height="8"/>
 <path d="M326 11 L334 2 L336 4 L328 12 L325.5 12.5 Z"/>
 <rect x="381" y="1" width="6" height="11" rx="3"/><path d="M384 1 V5 M381 5 H387" stroke="#232323" stroke-width="0.6"/>
 <path d="M431 3 A4 4 0 0 1 439 4 M439 9 A4 4 0 0 1 431 8" fill="none" stroke="#c8c8c8" stroke-width="0.9"/><path d="M437 2 l2.5 2.5 l-0.5 -3 z M433 10 l-2.5 -2.5 l0.5 3 z"/>
 <circle cx="469" cy="6" r="0.9"/><circle cx="472.5" cy="6" r="0.9"/><circle cx="476" cy="6" r="0.9"/>
</svg>
<div class="t ztl" style="left:260px">Выключить звук</div>
<div class="t ztl" style="left:302px">Остановить видео</div>
<div class="t ztl" style="left:345px">Безопасность</div>
<div class="t ztl" style="left:391px">Участники</div>
<div class="t ztl" style="left:441.5px">Чат</div>
<div class="t ztl" style="left:467px;color:#3ec45e">Новая демонстрация</div>
<div class="t ztl" style="left:518px">Пауза демонстрации</div>
<div class="t ztl" style="left:567.5px">Комментировать</div>
<div class="t ztl" style="left:611px">Дистанционное управление</div>
<div class="t ztl" style="left:677.5px">Приложения</div>
<div class="t ztl" style="left:713.5px">Дополнительно</div>
<!-- white strip right of toolbar -->
<!-- status bar -->
<div class="a" style="left:89px;top:594.5px;width:749px;height:15.5px;background:#f1f0f1"></div>
<div class="t sb" style="left:93.4px">Слайд 9 из 17</div>
<svg class="a" style="left:153px;top:597px" width="11" height="10" viewBox="0 0 11 10"><path d="M0.5 0.5 H4.5 V9.5 H0.5 Z M6 0.5 H10.5 M6 9.5 H10.5" fill="none" stroke="#777" stroke-width="0.8"/><path d="M6 4 L7.5 6 L10.5 1.5" fill="none" stroke="#777" stroke-width="0.9"/></svg>
<div class="t sb" style="left:173px">английский (США)</div>
<svg class="a" style="left:484px;top:597px" width="9" height="9" viewBox="0 0 9 9"><path d="M1 4 L4.5 1 L8 4 Z" fill="#999"/><path d="M1 6 h7 M1 8 h7" stroke="#999" stroke-width="0.9"/></svg>
<div class="t sb" style="left:496px">Заметки</div>
<svg class="a" style="left:535.5px;top:597px" width="10" height="10" viewBox="0 0 10 10"><path d="M0.5 0.5 H9.5 V6.5 H5 L2.5 9.5 V6.5 H0.5 Z" fill="#777"/></svg>
<div class="t sb" style="left:548px">Примечания</div>
<div class="a" style="left:603px;top:594.5px;width:23.5px;height:15.5px;background:#d2d2d2"></div>
<svg class="a" style="left:610px;top:597px" width="10" height="9" viewBox="0 0 10 9"><rect x="0.5" y="0.5" width="9" height="8" fill="none" stroke="#777" stroke-width="0.9"/><path d="M2.5 6 h5 M3.5 3 h3" stroke="#777" stroke-width="0.8"/></svg>
<svg class="a" style="left:634px;top:597px" width="10" height="9" viewBox="0 0 10 9" fill="none" stroke="#999" stroke-width="0.8"><rect x="0.5" y="0.5" width="3.5" height="3"/><rect x="6" y="0.5" width="3.5" height="3"/><rect x="0.5" y="5.5" width="3.5" height="3"/><rect x="6" y="5.5" width="3.5" height="3"/></svg>
<svg class="a" style="left:657px;top:597px" width="10" height="9" viewBox="0 0 10 9" fill="none" stroke="#888" stroke-width="0.8"><rect x="0.5" y="0.5" width="4" height="8"/><rect x="5.5" y="0.5" width="4" height="8"/><path d="M2.5 0.5 V8.5"/></svg>
<svg class="a" style="left:682px;top:597px" width="9" height="9" viewBox="0 0 9 9" fill="none" stroke="#888" stroke-width="0.8"><path d="M0.5 1 H8.5 M1.5 1 V5.5 H7.5 V1 M4.5 5.5 V8.5 M3 8.5 H6"/></svg>
<div class="a" style="left:702.5px;top:601.5px;width:5px;height:1px;background:#666"></div>
<div class="a" style="left:710px;top:601.5px;width:73px;height:1px;background:#c8c8c8"></div>
<div class="a" style="left:740px;top:598px;width:2.2px;height:8px;background:#777"></div>
<div class="a" style="left:746px;top:599.5px;width:1px;height:4px;background:#bbb"></div>
<div class="a" style="left:785.5px;top:601.5px;width:6px;height:1px;background:#666"></div>
<div class="a" style="left:788px;top:599px;width:1px;height:6px;background:#666"></div>
<div class="t sb" style="left:800.5px;font-size:7.2px;color:#777">86%</div>
<svg class="a" style="left:825px;top:597px" width="10" height="10" viewBox="0 0 10 10" fill="none" stroke="#888" stroke-width="0.8"><rect x="0.5" y="0.5" width="9" height="9"/><path d="M5 0.5 V9.5 M0.5 5 H9.5"/></svg>

<!-- taskbar -->
<div class="a" style="left:89px;top:610px;width:749px;height:29px;background:#213234"></div>
<svg class="a" style="left:100.5px;top:618px" width="12" height="12" viewBox="0 0 12 12" fill="#fff"><path d="M0 1.7 L5 1 V5.6 H0 Z M5.8 0.9 L12 0 V5.6 H5.8 Z M0 6.3 H5 V11 L0 10.3 Z M5.8 6.3 H12 V12 L5.8 11.1 Z"/></svg>
<svg class="a" style="left:135.5px;top:618.5px" width="12" height="12" viewBox="0 0 12 12"><circle cx="6" cy="6" r="5" fill="none" stroke="#fff" stroke-width="1.4"/></svg>
<svg class="a" style="left:170.5px;top:618px" width="13" height="12" viewBox="0 0 13 12" fill="none" stroke="#fff" stroke-width="1"><path d="M0.5 0.5 H8 M0.5 11.5 H8 M1.5 3 H7.5 V9 H1.5 Z M11 0 V2 M11 4 V12"/></svg>
<div class="a" style="left:205px;top:615.5px;width:18px;height:17.5px;border-radius:6px;background:radial-gradient(circle at 40% 35%,#3d8cff,#0b5cff 60%,#0a4ed8)"></div>
<div class="t" style="left:207.5px;top:622.5px;font-size:4.2px;color:#fff;font-weight:bold">zoom</div>
<div class="a" style="left:199.5px;top:637px;width:30px;height:1.6px;background:#76b9ed"></div>
<!-- chrome 1 -->
<div class="a" style="left:242px;top:615.5px;width:17.5px;height:17.5px;border-radius:50%;background:conic-gradient(from -60deg,#db4437 0 120deg,#f4c20d 120deg 240deg,#0f9d58 240deg 360deg)"></div>
<div class="a" style="left:247px;top:620.5px;width:7.5px;height:7.5px;border-radius:50%;background:#4285f4;box-shadow:0 0 0 1.3px #fff"></div>
<div class="a" style="left:251px;top:622px;width:9px;height:11px;border-radius:50%;background:radial-gradient(circle at 50% 40%,#d0c0b0,#8a7262 60%,#5a4a40)"></div>
<div class="a" style="left:236px;top:637px;width:30px;height:1.6px;background:#76b9ed"></div>
<!-- word -->
<div class="a" style="left:283px;top:617px;width:12px;height:14.5px;background:#fff;border:1px solid #2b579a"></div>
<div class="a" style="left:285px;top:619.5px;width:8px;height:10px;background:repeating-linear-gradient(#2b579a 0 1px,#fff 1px 2px)"></div>
<div class="a" style="left:278.5px;top:616.5px;width:11px;height:15.5px;background:#2b579a"></div>
<div class="t" style="left:279.5px;top:620px;font-size:8px;font-weight:bold;color:#fff">W</div>
<!-- viber -->
<div class="a" style="left:315px;top:615.5px;width:17px;height:16px;border-radius:45%;background:#fff"></div>
<div class="a" style="left:316.5px;top:617px;width:14px;height:13px;border-radius:45%;background:#7360f2"></div>
<div class="a" style="left:319px;top:630px;width:0;height:0;border-left:2px solid transparent;border-right:2px solid transparent;border-top:3px solid #fff"></div>
<svg class="a" style="left:319px;top:619px" width="9" height="9" viewBox="0 0 9 9"><path d="M1.5 1.2 C2.2 0.6 2.8 0.8 3.2 1.6 L3.7 2.7 C3.9 3.2 3.6 3.5 3.2 3.8 C3.6 4.8 4.3 5.5 5.2 5.9 C5.5 5.4 5.8 5.1 6.3 5.3 L7.4 5.8 C8.2 6.2 8.3 6.8 7.8 7.4 C6.8 8.6 5 8.3 3.2 6.6 C1.2 4.8 0.5 2.2 1.5 1.2 Z" fill="#fff"/></svg>
<div class="a" style="left:308px;top:637px;width:30px;height:1.6px;background:#76b9ed"></div>
<!-- chrome 2 -->
<div class="a" style="left:350.5px;top:615.5px;width:17.5px;height:17.5px;border-radius:50%;background:conic-gradient(from -60deg,#db4437 0 120deg,#f4c20d 120deg 240deg,#0f9d58 240deg 360deg)"></div>
<div class="a" style="left:355.5px;top:620.5px;width:7.5px;height:7.5px;border-radius:50%;background:#4285f4;box-shadow:0 0 0 1.3px #fff"></div>
<div class="a" style="left:359.5px;top:624px;width:9px;height:9px;border-radius:50%;background:#0d5e4a;box-shadow:0 0 0 1px #213234"></div>
<!-- explorer -->
<div class="a" style="left:387px;top:617.5px;width:6px;height:3px;background:#e8b030"></div>
<div class="a" style="left:387px;top:619px;width:16.5px;height:12.5px;background:#f7d154"></div>
<div class="a" style="left:390.5px;top:625px;width:9px;height:6.5px;border:2px solid #2d8ee0;border-bottom:none"></div>
<div class="a" style="left:381px;top:637px;width:23px;height:1.6px;background:#76b9ed"></div>
<div class="a" style="left:405px;top:637px;width:6px;height:1.6px;background:#5a8ab0"></div>
<!-- powerpoint active -->
<div class="a" style="left:414px;top:610px;width:36px;height:29px;background:#3b4a4c"></div>
<div class="a" style="left:429px;top:618px;width:11px;height:12.5px;background:#fff;border:1px solid #d04423"></div>
<div class="a" style="left:432px;top:622px;width:6px;height:5px;background:repeating-linear-gradient(#d04423 0 1px,#fff 1px 2px)"></div>
<div class="a" style="left:423.5px;top:616.5px;width:11px;height:15px;background:#d04423"></div>
<div class="t" style="left:425.5px;top:620px;font-size:8.5px;font-weight:bold;color:#fff">P</div>
<div class="a" style="left:414px;top:637px;width:36px;height:1.6px;background:#76b9ed"></div>
<!-- weather -->
<div class="a" style="left:515px;top:616.5px;width:13px;height:13px;border-radius:50%;background:radial-gradient(circle at 40% 40%,#ffc040,#f09010)"></div>
<div class="a" style="left:518px;top:624.5px;width:13px;height:6px;border-radius:4px;background:#c8d8f8"></div>
<div class="a" style="left:521px;top:622px;width:7px;height:6px;border-radius:50%;background:#c8d8f8"></div>
<div class="t tb" style="left:537.5px">14°C</div>
<div class="t tb" style="left:564.7px">Partly sunny</div>
<svg class="a" style="left:638.5px;top:621px" width="11" height="6" viewBox="0 0 11 6"><path d="M0.5 5.5 L5.5 0.8 L10.5 5.5" fill="none" stroke="#fff" stroke-width="1"/></svg>
<svg class="a" style="left:657px;top:619px" width="10" height="11" viewBox="0 0 10 11" fill="none" stroke="#ddd" stroke-width="0.8"><rect x="0.5" y="2" width="6" height="7" rx="1.5"/><path d="M6.5 4.5 L9.5 3 V8 L6.5 6.5 M2.5 0.5 h2 M2.5 10.5 h2"/></svg>
<svg class="a" style="left:675.5px;top:618px" width="7" height="13" viewBox="0 0 7 13"><rect x="1" y="0" width="5" height="9" rx="1.5" fill="#fff"/><path d="M0.5 8 A3 3 0 0 0 6.5 8 M3.5 11 V13" stroke="#bbb" stroke-width="0.8" fill="none"/></svg>
<svg class="a" style="left:690px;top:619px" width="12" height="11" viewBox="0 0 12 11" fill="none" stroke="#ddd" stroke-width="0.8"><rect x="3" y="2" width="8.5" height="6"/><path d="M7 8 V10 M5 10.5 H9 M0.5 1 H3 M0.5 3 H2"/></svg>
<svg class="a" style="left:707px;top:619px" width="11" height="11" viewBox="0 0 11 11" fill="none" stroke="#ddd" stroke-width="0.8"><path d="M0.5 4 H2.5 L5 1.5 V9.5 L2.5 7 H0.5 Z M7 3.5 A2.5 2.5 0 0 1 7 7.5 M8.5 2 A4.5 4.5 0 0 1 8.5 9"/></svg>
<div class="t tb" style="left:728px;font-size:8.2px">УКР</div>
<div class="t" style="left:764px;top:614px;font-size:8.5px;color:#fff">13:37</div>
<div class="t" style="left:753.5px;top:627px;font-size:8.5px;color:#fff">03.11.2022</div>
<svg class="a" style="left:808px;top:617px" width="18" height="16" viewBox="0 0 18 16"><path d="M0.5 0.5 H12.5 V9 H4 L1.5 11 V9 H0.5 Z" fill="#fff"/><path d="M2.5 3 h8 M2.5 5 h8 M2.5 7 h6" stroke="#213234" stroke-width="0.7"/><circle cx="12" cy="11" r="4.5" fill="#213234" stroke="#ccc" stroke-width="0.7"/><text x="10.3" y="13.6" font-size="6.5" fill="#fff" font-family="Liberation Sans">1</text></svg>
<div class="a" style="left:834.5px;top:610px;width:0.8px;height:29px;background:#5a6a6c"></div>
<!-- Zoom gallery -->
<!-- tile 1 Ольга -->
<div class="tile" style="left:955px;top:114px;background:#3a3836">
 <div class="a ph" style="left:0;top:0;width:192px;height:108px;filter:blur(1.2px)">
 <div class="a" style="left:0;top:0;width:22px;height:108px;background:linear-gradient(90deg,#c8ccc4,#a8aca4)"></div>
 <div class="a" style="left:0;top:5px;width:14px;height:70px;background:radial-gradient(ellipse at 30% 50%,#3d6a3a 0 40%,transparent 70%)"></div>
 <div class="a" style="left:14px;top:0;width:112px;height:4px;background:#b8b4ac"></div>
 <div class="a" style="left:12px;top:0;width:7px;height:108px;background:#8a8884"></div>
 <div class="a" style="left:19px;top:4px;width:74px;height:56px;background:#443e3c"></div>
 <div class="a" style="left:19px;top:32px;width:74px;height:3px;background:#595552"></div>
 <div class="a" style="left:46px;top:24px;width:20px;height:7px;background:#c05a30"></div>
 <div class="a" style="left:66px;top:18px;width:14px;height:11px;background:#6f8ab0"></div>
 <div class="a" style="left:65px;top:42px;width:11px;height:17px;background:#6a6aa0"></div>
 <div class="a" style="left:35px;top:50px;width:30px;height:9px;background:#5a5a64;border-radius:3px"></div>
 <div class="a" style="left:93px;top:0;width:33px;height:37px;background:#332e2c"></div>
 <div class="a" style="left:98px;top:30px;width:20px;height:6px;background:#d8d8d8;border-radius:2px"></div>
 <div class="a" style="left:19px;top:60px;width:75px;height:28px;background:linear-gradient(#ad9f90,#9d9080)"></div>
 <div class="a" style="left:30px;top:67px;width:60px;height:1.5px;background:#3a3230"></div>
 <div class="a" style="left:93px;top:37px;width:33px;height:34px;background:linear-gradient(#a29585,#8f8272)"></div>
 <div class="a" style="left:93px;top:57px;width:33px;height:1.5px;background:#504640"></div>
 <div class="a" style="left:93px;top:71px;width:30px;height:37px;background:#8f8474"></div>
 <div class="a" style="left:57px;top:72px;width:48px;height:20px;background:#cfcfcf;border-radius:50% 50% 10% 10%"></div>
 <div class="a" style="left:118px;top:-4px;width:80px;height:120px;border-radius:50% 0 0 20%;background:linear-gradient(90deg,#8a7058,#b09474 35%,#9a8064)"></div>
 <div class="a" style="left:98px;top:55px;width:50px;height:60px;border-radius:60% 20% 0 0;background:linear-gradient(90deg,#9c8266,#b89a78 50%,#8a7058)"></div>
 <div class="a" style="left:133px;top:6px;width:64px;height:90px;border-radius:48% 30% 42% 48%;background:radial-gradient(ellipse at 50% 40%,#e6cab8,#d6b4a0 55%,#bc9680)"></div>
 <div class="a" style="left:126px;top:2px;width:30px;height:40px;border-radius:50% 10% 30% 0;background:#ad9272"></div>
 <div class="a" style="left:137px;top:41px;width:28px;height:19px;border:1.5px solid #6a5648;border-radius:45%"></div>
 <div class="a" style="left:166px;top:41px;width:30px;height:19px;border:1.5px solid #6a5648;border-radius:45%"></div>
 <div class="a" style="left:144px;top:94px;width:50px;height:16px;border-radius:40% 0 0 0;background:#2c2824"></div>
  </div>
 <div class="lbl" style="width:113.7px"><span style="left:4.5px;top:3.5px">Ольга Добринчук</span></div>
</div>
<!-- tile 2 Тетяна Калинюк -->
<div class="tile" style="left:1153px;top:114px;background:linear-gradient(160deg,#727272,#6c6c6c 50%,#5e605e)">
 <div class="a ph" style="left:0;top:0;width:192px;height:108px;filter:blur(1.2px)">
 <div class="a" style="left:4px;top:15px;width:30px;height:11px;border-radius:50%;border:1.5px solid rgba(225,230,235,.55);border-left-color:transparent;border-bottom-color:rgba(225,230,235,.4)"></div><div class="a" style="left:0;top:12px;width:14px;height:24px;background:radial-gradient(ellipse,rgba(220,225,230,.5),transparent 70%)"></div>
 <div class="a" style="left:58px;top:15px;width:78px;height:95px;border-radius:45% 45% 20% 20%;background:#8e5a3e"></div>
 <div class="a" style="left:70px;top:21px;width:56px;height:66px;border-radius:45% 45% 45% 45%;background:radial-gradient(ellipse at 50% 50%,#ecc8c0,#d8a8a0 70%,#c08a80)"></div>
 <div class="a" style="left:75px;top:42px;width:22px;height:17px;border:1.2px solid #6a4a50;border-radius:45%"></div>
 <div class="a" style="left:101px;top:46px;width:24px;height:18px;border:1.2px solid #6a4a50;border-radius:45%"></div>
 <div class="a" style="left:87px;top:74px;width:16px;height:5px;border-radius:50%;background:#c07880"></div>
 <div class="a" style="left:118px;top:96px;width:36px;height:12px;border-radius:40% 40% 0 0;background:#d8c8b4"></div>
 <div class="a" style="left:78px;top:82px;width:40px;height:26px;background:#cfa49a;border-radius:30% 30% 0 0"></div>
  </div>
 <div class="lbl" style="width:123px"><span style="left:22px">Тетяна Калинюк</span><svg class="mute" viewBox="0 0 14 13"><path d="M5 1.5 A2 2 0 0 1 9 1.5 V6 A2 2 0 0 1 5 6 Z" fill="#e0504a"/><path d="M3.5 5.5 A3.5 3.5 0 0 0 10.5 5.5 M7 9 V11 M4.5 11.5 H9.5" fill="none" stroke="#e0504a" stroke-width="1"/><path d="M1 12 L12 0.5" stroke="#e0504a" stroke-width="1.2"/></svg></div>
</div>
<!-- tile 3 Bodnarchuk -->
<div class="tile" style="left:955px;top:228px;background:linear-gradient(90deg,#c4c4c0,#cdcdc9 50%,#c0c0bc)">
 <div class="a ph" style="left:0;top:0;width:192px;height:108px;filter:blur(1.2px)">
 <div class="a" style="left:0;top:80px;width:192px;height:28px;background:linear-gradient(90deg,#8a8886,#6a6866 60%,#5a5856)"></div>
 <div class="a" style="left:60px;top:32px;width:68px;height:60px;border-radius:50% 50% 35% 35%;background:#2a2624"></div>
 <div class="a" style="left:72px;top:50px;width:44px;height:60px;border-radius:40%;background:radial-gradient(ellipse at 50% 50%,#b89488,#9c7868 70%,#7a5a50)"></div>
 <div class="a" style="left:74px;top:72px;width:18px;height:8px;border:1px solid #8a7a70;border-radius:40%"></div>
 <div class="a" style="left:96px;top:72px;width:18px;height:8px;border:1px solid #8a7a70;border-radius:40%"></div>
 <div class="a" style="left:140px;top:98px;width:52px;height:10px;background:#2e2a28"></div>
  </div>
 <div class="lbl" style="width:139px"><span style="left:22px">Tetiana Bodnarchuk</span><svg class="mute" viewBox="0 0 14 13"><path d="M5 1.5 A2 2 0 0 1 9 1.5 V6 A2 2 0 0 1 5 6 Z" fill="#e0504a"/><path d="M3.5 5.5 A3.5 3.5 0 0 0 10.5 5.5 M7 9 V11 M4.5 11.5 H9.5" fill="none" stroke="#e0504a" stroke-width="1"/><path d="M1 12 L12 0.5" stroke="#e0504a" stroke-width="1.2"/></svg></div>
</div>
<!-- tile 4 Viktoria -->
<div class="tile" style="left:1153px;top:228px">
 <div class="big" style="top:46px">Viktoria</div>
 <div class="lbl" style="width:69.6px"><span style="left:22px">Viktoria</span><svg class="mute" viewBox="0 0 14 13"><path d="M5 1.5 A2 2 0 0 1 9 1.5 V6 A2 2 0 0 1 5 6 Z" fill="#e0504a"/><path d="M3.5 5.5 A3.5 3.5 0 0 0 10.5 5.5 M7 9 V11 M4.5 11.5 H9.5" fill="none" stroke="#e0504a" stroke-width="1"/><path d="M1 12 L12 0.5" stroke="#e0504a" stroke-width="1.2"/></svg></div>
</div>
<!-- tile 5 -->
<div class="tile" style="left:955px;top:342px">
 <div class="big" style="top:46px">Тетяна&nbsp; Гермакі...</div>
 <div class="lbl" style="width:148.8px"><span style="left:22px">Тетяна Гермаківська</span><svg class="mute" viewBox="0 0 14 13"><path d="M5 1.5 A2 2 0 0 1 9 1.5 V6 A2 2 0 0 1 5 6 Z" fill="#e0504a"/><path d="M3.5 5.5 A3.5 3.5 0 0 0 10.5 5.5 M7 9 V11 M4.5 11.5 H9.5" fill="none" stroke="#e0504a" stroke-width="1"/><path d="M1 12 L12 0.5" stroke="#e0504a" stroke-width="1.2"/></svg></div>
</div>
<!-- tile 6 -->
<div class="tile" style="left:1153px;top:342px">
 <div class="big" style="top:46px">Victoria</div>
 <div class="lbl" style="width:69.5px"><span style="left:22px">Victoria</span><svg class="mute" viewBox="0 0 14 13"><path d="M5 1.5 A2 2 0 0 1 9 1.5 V6 A2 2 0 0 1 5 6 Z" fill="#e0504a"/><path d="M3.5 5.5 A3.5 3.5 0 0 0 10.5 5.5 M7 9 V11 M4.5 11.5 H9.5" fill="none" stroke="#e0504a" stroke-width="1"/><path d="M1 12 L12 0.5" stroke="#e0504a" stroke-width="1.2"/></svg></div>
</div>
<!-- tile 7 Ліана -->
<div class="tile" style="left:955px;top:456px">
 <div class="a" style="left:56px;top:14px;width:80px;height:80px;background:#ea3f7b"></div>
 <div class="t" style="left:82.5px;top:34.5px;font-size:42px;color:#fff;transform:scaleX(1.02)">Л</div>
 <div class="lbl" style="width:109.8px"><span style="left:22px">Ліана Шамрій</span><svg class="mute" viewBox="0 0 14 13"><path d="M5 1.5 A2 2 0 0 1 9 1.5 V6 A2 2 0 0 1 5 6 Z" fill="#e0504a"/><path d="M3.5 5.5 A3.5 3.5 0 0 0 10.5 5.5 M7 9 V11 M4.5 11.5 H9.5" fill="none" stroke="#e0504a" stroke-width="1"/><path d="M1 12 L12 0.5" stroke="#e0504a" stroke-width="1.2"/></svg></div>
</div>
<!-- tile 8 Vita with border -->
<div class="a" style="left:1149px;top:452px;width:200px;height:116px;background:linear-gradient(#e4ec90,#c4e462 25%,#8ed41a 50%,#c4e462 75%,#e8f094)"></div>
<div class="tile" style="left:1153px;top:456px">
 <div class="a" style="left:56px;top:14px;width:80px;height:80px;overflow:hidden;background:linear-gradient(90deg,#a8a8a8,#d8d8d8 45%,#f2f2f2)">
  <div class="a" style="left:0;top:0;width:80px;height:80px;filter:blur(0.7px)">
   <div class="a" style="left:17px;top:4px;width:40px;height:30px;border-radius:50% 50% 10% 20%;background:#2c2c2c"></div>
   <div class="a" style="left:14px;top:18px;width:12px;height:62px;border-radius:40% 20% 0 0;background:#2a2a2a"></div>
   <div class="a" style="left:51px;top:18px;width:8px;height:46px;border-radius:20% 50% 30% 10%;background:#484848;transform:rotate(-16deg)"></div>
   <div class="a" style="left:22px;top:17px;width:30px;height:46px;border-radius:45% 45% 50% 50%;background:radial-gradient(ellipse at 55% 45%,#ececec,#cacaca 60%,#9c9c9c)"></div>
   <div class="a" style="left:27px;top:33px;width:6px;height:2px;background:#555"></div><div class="a" style="left:40px;top:32px;width:6px;height:2px;background:#555"></div>
   <div class="a" style="left:42px;top:58px;width:38px;height:24px;background:repeating-linear-gradient(65deg,#f4f4f4 0 4px,#707070 4px 5px),#fff"></div>
   <div class="a" style="left:-4px;top:58px;width:34px;height:26px;border-radius:50% 40% 0 0;background:#3c3c3c"></div>
   <div class="a" style="left:28px;top:64px;width:16px;height:18px;background:#303030"></div>
  </div>
 </div>
 <div class="lbl" style="width:92.8px"><span style="left:4px">Vita Hnatyshyn</span></div>
</div>
</body></html>
